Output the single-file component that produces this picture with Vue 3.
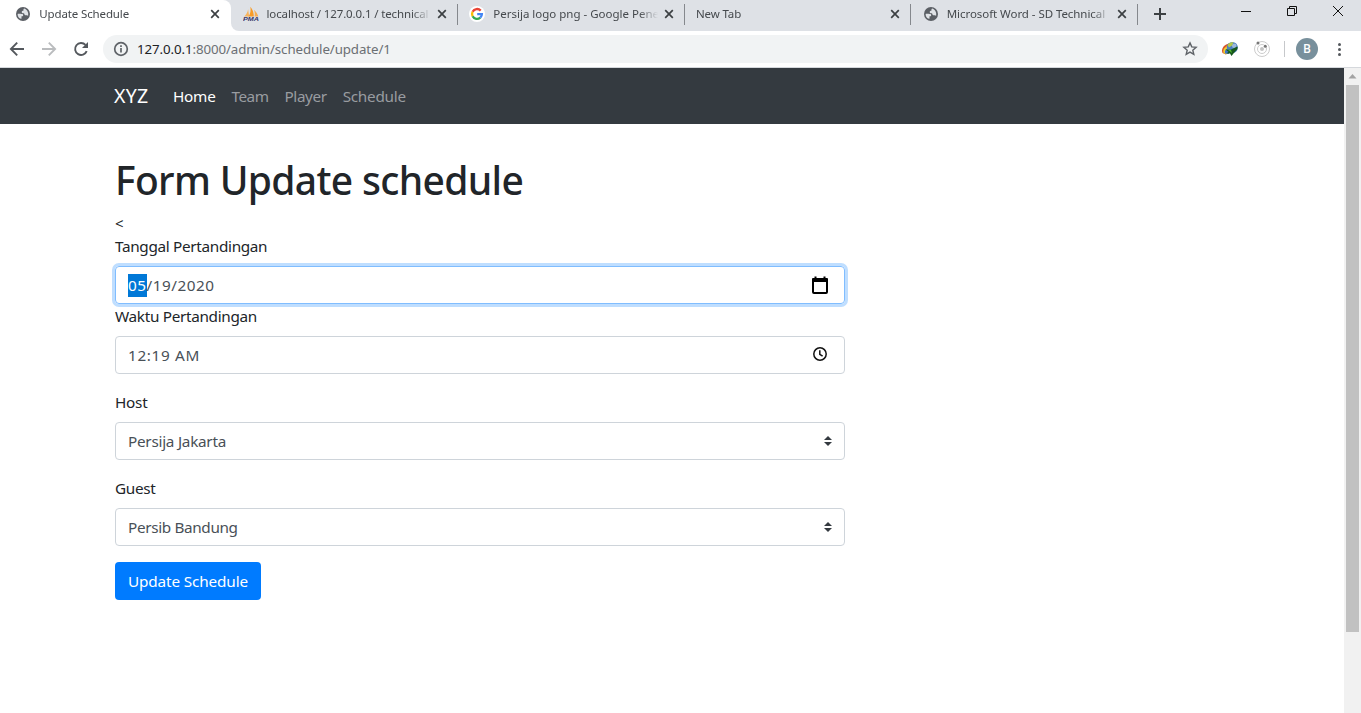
<script setup>
const tabs = [
  { title: 'Update Schedule', icon: 'globe', active: true },
  { title: 'localhost / 127.0.0.1 / technical', icon: 'pma', cls: 't-pma' },
  { title: 'Persija logo png - Google Pene', icon: 'google', cls: 't-goo' },
  { title: 'New Tab', icon: '', cls: 't-new' },
  { title: 'Microsoft Word - SD Technical', icon: 'globe', cls: 't-word' },
]
const links = [
  { label: 'Home', cls: 'home' },
  { label: 'Team', cls: 'team' },
  { label: 'Player', cls: 'player' },
  { label: 'Schedule', cls: 'sched' },
]
</script>

<template>
  <div class="window">
    <header class="strip">
      <div class="tabs">
        <div v-for="t in tabs" :key="t.title" class="tab" :class="[t.cls, { active: t.active }]">
          <svg v-if="t.icon === 'globe'" class="fav" viewBox="0 0 16 16">
            <circle cx="8" cy="8" r="7" fill="#5b5f65" />
            <path d="M2.6 7.900c1.600-.1 3 .1 4.300.1.900 0 1.300.5 1.300 1.200 0 .9-.8 1.100-1.700 1.100v2.500C4.300 12.600 2.600 10.700 2.600 7.900z" fill="#dfe2e6" />
            <path d="M9.300 2.600C8.500 3 8.300 3.800 8.600 4.400 7.400 4.500 6.700 5.100 6.700 6c0 .9.7 1.200 1.600 1.200.7 0 1 .4 1.100 1 .2.800.9 1.100 1.800 1 .9-.1 1.500.1 1.900.5.7-2.600-.7-6.100-3.800-7.100z" fill="#dfe2e6" />
          </svg>
          <svg v-else-if="t.icon === 'pma'" class="fav" viewBox="0 0 16 16">
            <path d="M1.200 10.500C3.300 8.700 4.600 6.200 5.100 3.200l1.100 7.300z" fill="#f7b35c" />
            <path d="M5.500 10.500C7.600 7.800 8 4.200 7.300.8c2.200 2.400 3.600 5.800 3.500 9.700z" fill="#f89c27" />
            <path d="M11.600 10.500c.4-2.600.2-4.700-.5-6.600 2.300 1.700 3.500 4 4.200 6.600z" fill="#f7ad50" />
            <text x="0" y="15.300" textLength="16" lengthAdjust="spacingAndGlyphs" class="pma">PMA</text>
          </svg>
          <svg v-else-if="t.icon === 'google'" class="fav" viewBox="0 0 16 16">
            <circle cx="8" cy="8" r="8" fill="#fff" />
            <g fill="none" stroke-width="2.300">
              <path d="M11.700 4.600A5 5 0 0 0 3.600 5.700" stroke="#ea4335" />
              <path d="M3.600 5.700a5 5 0 0 0 0 4.600" stroke="#fbbc05" />
              <path d="M3.600 10.300a5 5 0 0 0 7.700 1.400" stroke="#34a853" />
              <path d="M11.300 11.700A5 5 0 0 0 12.900 8.100H8.200" stroke="#4285f4" />
            </g>
          </svg>
          <span class="title">{{ t.title }}</span>
          <svg class="close" viewBox="0 0 10 10"><path d="M1.200 1.200l7.600 7.600M8.800 1.200L1.200 8.800" /></svg>
        </div>
      </div>
      <svg class="plus" viewBox="0 0 12 12"><path d="M6 0v12M0 6h12" /></svg>
      <div class="controls">
        <svg viewBox="0 0 12 12"><path d="M1 6.500h10" /></svg>
        <svg viewBox="0 0 12 12"><path d="M1.500 3.500h7v7h-7zM3.500 3.500v-2h7v7h-2" /></svg>
        <svg viewBox="0 0 12 12"><path d="M1 1l10 10M11 1L1 11" /></svg>
      </div>
    </header>

    <div class="toolbar">
      <svg class="nav-ic" viewBox="0 0 16 16"><path d="M15 8H2M8.200 1.700L1.900 8l6.300 6.300" /></svg>
      <svg class="nav-ic off" viewBox="0 0 16 16"><path d="M1 8h13M7.800 1.700L14.100 8l-6.300 6.300" /></svg>
      <svg class="nav-ic" viewBox="0 0 16 16"><path d="M13.700 10.200A6 6 0 1 1 12.500 3.900" /><path d="M15 1v6H9z" class="head" /></svg>
      <div class="omni">
        <svg class="info" viewBox="0 0 16 16"><circle cx="8" cy="8" r="6.300" /><path d="M8 7v4.500M8 4.300v1.700" /></svg>
        <span class="url"><b>127.0.0.1</b>:8000/admin/schedule/update/1</span>
        <svg class="star" viewBox="0 0 16 16"><path d="M8 1.900l1.750 4 4.350.4-3.300 2.850 1 4.250L8 11.150 4.200 13.400l1-4.250L1.900 6.300l4.350-.4z" /></svg>
      </div>
      <svg class="ext" viewBox="0 0 18 16">
        <path d="M1.500 12C-.2 7.500 3 3.500 8 2.500L9 7l-4 6.500z" fill="#d8552b" />
        <path d="M2.500 12c-1-3.500 1.500-6.500 5.500-7.500v7l-3 2z" fill="#f3d22c" />
        <path d="M4 12.500C3.300 9.500 5 7.500 8 7v6z" fill="#3f74c4" />
        <circle cx="11.300" cy="6.500" r="5.500" fill="#4a7fc0" />
        <circle cx="13.200" cy="4.700" r="2.300" fill="#9db9dc" />
        <path d="M6.500 4c1.200-2.300 3.700-3.300 6-2.700L11 4.500 8 6.500z" fill="#b5c94a" />
        <path d="M4.500 8.500l5 .3 7-3.300c.5 2-.5 3.500-2 4.500l-4 5-1.500-2.500H5.500l2-1.800z" fill="#16581c" />
        <path d="M6.500 8.500l3.500.5 1 3z" fill="#52b92f" />
      </svg>
      <svg class="orbit" viewBox="0 0 18 18">
        <circle cx="9" cy="9" r="7.500" /><circle cx="9" cy="9" r="4.500" />
        <circle cx="9" cy="9" r="2" class="core" /><circle cx="5" cy="3" r="1.500" class="moon" /><circle cx="12.300" cy="6.200" r="1.500" class="moon" />
      </svg>
      <i class="bar"></i>
      <span class="avatar">B</span>
      <span class="dots"><i></i><i></i><i></i></span>
    </div>

    <div class="viewport">
      <div class="page">
        <nav class="navbar">
          <span class="brand">XYZ</span>
          <a v-for="l in links" :key="l.label" :class="l.cls">{{ l.label }}</a>
        </nav>
        <main class="form">
          <h1>Form Update schedule</h1>
          <div class="stray">&lt;</div>
          <label class="l-date">Tanggal Pertandingan</label>
          <div class="control focus">
            <span class="date"><mark>05</mark>/19/2020</span>
            <svg class="cal" viewBox="0 0 18 20"><rect x="2" y="4.500" width="14" height="13.500" rx="1" /><path d="M2 3h14q1 0 1 1v3H1V4q0-1 1-1zM3.500 1.500h2V4h-2zM12.500 1.500h2V4h-2z" class="solid" /></svg>
          </div>
          <label class="l-time">Waktu Pertandingan</label>
          <div class="control gap">
            <span class="time">12:19 AM</span>
            <svg class="clock" viewBox="0 0 16 16"><circle cx="8" cy="8" r="6.200" /><path d="M7.800 4.300V8.300l2.800 1.900" /></svg>
          </div>
          <label class="l-host">Host</label>
          <div class="control gap">
            <span class="v-host">Persija Jakarta</span>
            <svg class="caret" viewBox="0 0 8 10"><path d="M4 0l4 4H0zM4 10l4-4H0z" /></svg>
          </div>
          <label class="l-guest">Guest</label>
          <div class="control gap">
            <span class="v-guest">Persib Bandung</span>
            <svg class="caret" viewBox="0 0 8 10"><path d="M4 0l4 4H0zM4 10l4-4H0z" /></svg>
          </div>
          <button type="button"><span>Update Schedule</span></button>
        </main>
      </div>
      <div class="scroll">
        <svg viewBox="0 0 17 17"><path d="M8.500 6l4 4.500h-8z" /></svg>
        <div class="thumb"></div>
      </div>
    </div>
  </div>
</template>

<style>
body { background: #fff; overflow: hidden; }
</style>

<style scoped>
* { box-sizing: border-box; }
svg { display: block; flex: none; }
.window { width: 1361px; height: 713px; display: flex; flex-direction: column; overflow: hidden; font-family: "Noto Sans", "Open Sans", sans-serif; color: #212529; background: #fff; }
.strip { height: 31px; flex: none; background: #dee1e6; display: flex; }
.tabs { display: flex; padding-left: 4.250px; height: 31px; background: linear-gradient(90deg, #fff 0 5px, #dee1e6 5px); }
.tab { width: 226.750px; height: 31px; display: flex; align-items: flex-start; padding: 0 11px 0 11.500px; background: linear-gradient(#85888d, #85888d) right 4px / 1px 21px no-repeat #dee1e6; font-size: 11.500px; line-height: 16px; color: #45494d; letter-spacing: -.13px; }
.tab.active { position: relative; z-index: 1; background: #fff; border-radius: 0 8px 0 0; padding-left: 11px; }
.tab.active + .tab { border-bottom-left-radius: 8px; box-shadow: -8px 8px 0 #fff; }
.t-goo { letter-spacing: 0; }
.t-word { letter-spacing: -.06px; }
.fav { width: 16px; height: 16px; margin: 6px 8px 0 0; }
.pma { font: italic bold 5.500px "Liberation Sans", sans-serif; fill: #35376a; letter-spacing: 0; }
.title { flex: 1; margin-top: 6px; overflow: hidden; white-space: nowrap; margin-right: 5px; -webkit-mask-image: linear-gradient(90deg, #000 calc(100% - 20px), transparent calc(100% - 1px)); mask-image: linear-gradient(90deg, #000 calc(100% - 20px), transparent calc(100% - 1px)); }
.close { width: 10px; height: 10px; margin-top: 9px; }
.close path { fill: none; stroke: #3c4043; stroke-width: 1.700; }
.plus { width: 12px; height: 12px; margin: 8px 0 0 16px; }
.plus path { stroke: #3c4043; stroke-width: 2; }
.controls { display: flex; gap: 34px; margin: 5px 0 0 auto; padding-right: 17px; }
.controls svg { width: 12px; height: 12px; }
.controls path { fill: none; stroke: #111; stroke-width: 1; }
.toolbar { height: 37px; flex: none; display: flex; align-items: center; padding: 0 16px 0 9px; border-bottom: 1px solid #d5d8dc; background: #fff; }
.nav-ic { width: 16px; height: 16px; margin-right: 16px; fill: none; stroke: #54585d; stroke-width: 1.900; }
.nav-ic.off { stroke: #babcbe; }
.nav-ic .head { fill: #54585d; stroke: none; }
.omni { width: 1105px; margin-left: -2px; height: 28px; border-radius: 14px; background: #f1f3f4; display: flex; align-items: center; padding: 0 10px; }
.info { width: 16px; height: 16px; }
.info circle, .info path { fill: none; stroke: #5f6368; stroke-width: 1.700; }
.url { font-size: 13.300px; line-height: 20px; margin-left: 8px; color: #6b6f73; flex: 1; white-space: nowrap; letter-spacing: -.1px; }
.url b { font-weight: 400; color: #202124; }
.star { width: 16px; height: 16px; }
.star path { fill: none; stroke: #5f6368; stroke-width: 1.400; }
.ext { width: 18px; height: 16px; margin-left: 13px; }
.orbit { width: 18px; height: 18px; margin-left: 14px; fill: none; stroke: #ccc; stroke-width: 1; }
.orbit .core { fill: #c4c4c4; stroke: none; }
.orbit .moon { fill: #777; stroke: none; }
.bar { width: 1px; height: 16px; background: #c6c8cb; margin: 0 11px 0 13px; }
.avatar { width: 22px; height: 22px; border-radius: 50%; background: #78909c; color: #fff; font: 500 12px/22px Roboto, sans-serif; text-align: center; }
.dots { display: grid; gap: 2px; margin-left: auto; margin-right: 4px; }
.dots i { width: 3px; height: 3px; border-radius: 50%; background: #54585d; }
.viewport { flex: 1; display: flex; min-height: 0; }
.page { width: 1344px; }
.navbar { height: 56px; background: #343a40; padding-left: 114px; display: flex; align-items: center; font-size: 15.300px; line-height: 24px; color: #999ca0; }
.navbar a { margin-right: 16px; }
.brand { color: #fff; font-size: 19.500px; line-height: 30px; width: 59px; letter-spacing: .3px; }
.navbar .home { color: #fff; letter-spacing: -.25px; }
.team { letter-spacing: -.5px; }
.player { letter-spacing: -.4px; }
.sched { letter-spacing: -.25px; }
.form { padding: 32px 0 0 115px; width: 845px; font-size: 15.300px; line-height: 24px; }
h1 { font-size: 39px; line-height: 48px; font-weight: 500; margin: 0 0 8px; white-space: nowrap; letter-spacing: -.66px; }
.stray { font-size: 15px; height: 22px; line-height: 22px; }
label { display: block; height: 24px; margin-bottom: 8px; letter-spacing: -.32px; }
.l-host { letter-spacing: -.25px; }
.control { height: 38px; border: 1px solid #ced4da; border-radius: 4px; padding: 0 12px; display: flex; align-items: center; justify-content: space-between; color: #495057; }
.control.focus { border-color: #80bdff; box-shadow: 0 0 0 3px #bfdeff; }
.gap { margin-bottom: 16px; }
.date { letter-spacing: .5px; }
.time { letter-spacing: .65px; }
.v-host { letter-spacing: -.26px; }
.v-guest { letter-spacing: -.35px; }
mark { background: #0078d7; color: #fff; display: inline-block; height: 23px; line-height: 23px; }
.cal { width: 18px; height: 20px; margin-right: 3px; }
.cal * { fill: none; stroke: #000; stroke-width: 2; }
.cal .solid { fill: #000; stroke: none; }
.clock { width: 16px; height: 16px; margin: -2px 4px 0 0; }
.clock * { fill: none; stroke: #111; stroke-width: 1.500; }
.caret { width: 8px; height: 10px; }
.caret path { fill: #343a40; }
button { width: 146px; height: 38px; border: 0; border-radius: 4px; background: #007bff; color: #fff; font: 15.300px/24px "Noto Sans", "Open Sans", sans-serif; padding: 0; white-space: nowrap; letter-spacing: -.13px; }
.scroll { width: 17px; background: #f1f1f1; }
.scroll svg { width: 17px; height: 17px; }
.scroll path { fill: #a3a3a3; }
.thumb { width: 13px; height: 547px; margin: 0 2px; background: #c1c1c1; }
</style>
